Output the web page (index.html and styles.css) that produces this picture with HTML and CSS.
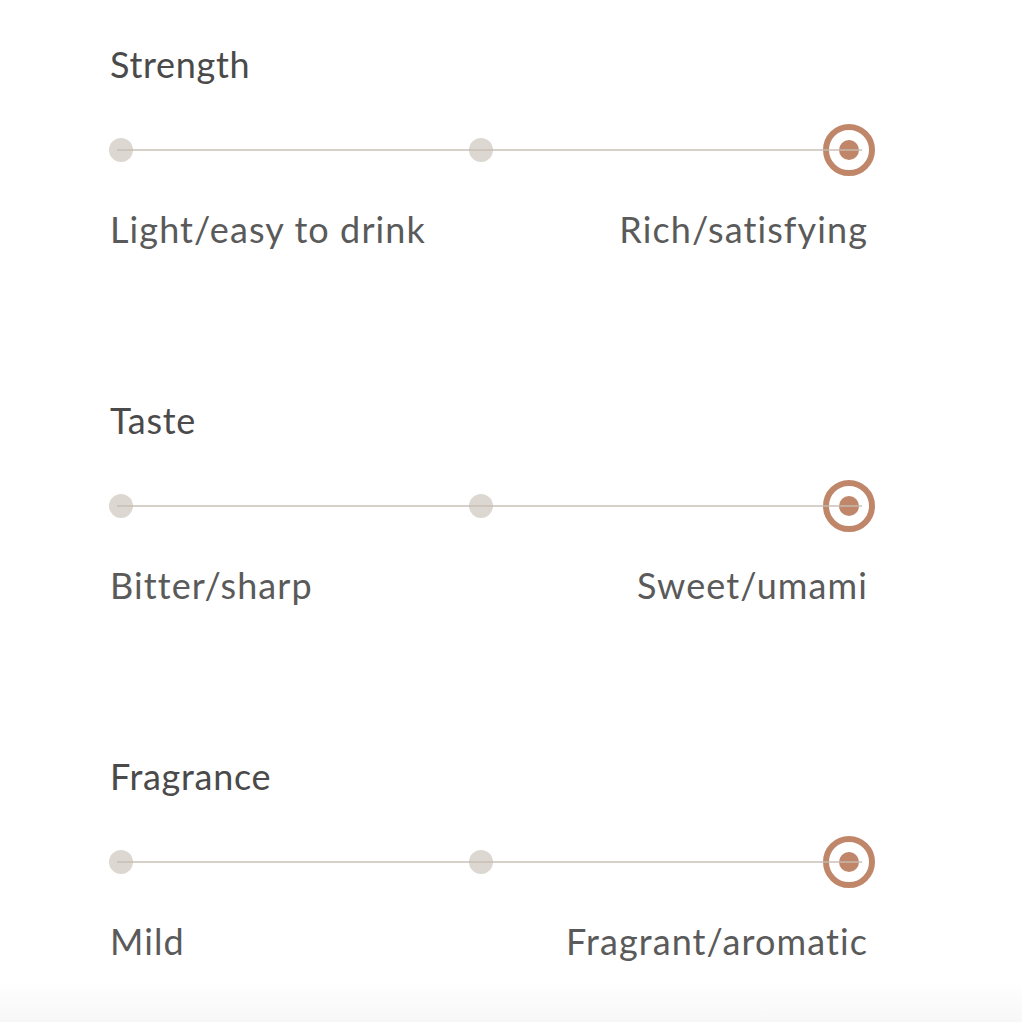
FILE: index.html
```html
<!DOCTYPE html>
<html lang="en">
<head>
<meta charset="utf-8">
<title>Flavour profile</title>
<link rel="stylesheet" href="styles.css">
</head>
<body>
<main class="profile">
  <section class="scale">
    <h2 class="scale-title">Strength</h2>
    <div class="track">
      <span class="line"></span>
      <span class="dot"></span>
      <span class="dot dot-mid"></span>
      <span class="knob"><span class="knob-core"></span></span>
    </div>
    <div class="labels"><span>Light/easy to drink</span><span>Rich/satisfying</span></div>
  </section>
  <section class="scale">
    <h2 class="scale-title">Taste</h2>
    <div class="track">
      <span class="line"></span>
      <span class="dot"></span>
      <span class="dot dot-mid"></span>
      <span class="knob"><span class="knob-core"></span></span>
    </div>
    <div class="labels"><span>Bitter/sharp</span><span>Sweet/umami</span></div>
  </section>
  <section class="scale">
    <h2 class="scale-title">Fragrance</h2>
    <div class="track">
      <span class="line"></span>
      <span class="dot"></span>
      <span class="dot dot-mid"></span>
      <span class="knob"><span class="knob-core"></span></span>
    </div>
    <div class="labels"><span>Mild</span><span>Fragrant/aromatic</span></div>
  </section>
</main>
</body>
</html>
```
FILE: styles.css
```css
html {
  min-height: 100%;
  background: linear-gradient(to bottom, #ffffff 0%, #ffffff 96%, #f7f7f7 100%);
}
body {
  margin: 0;
  font-family: Lato, "Liberation Sans", sans-serif;
  color: #4e4e4e;
}
.profile {
  width: 758px;
  padding: 46px 0 30px 110px;
}
.scale + .scale {
  margin-top: 155px;
}
.scale-title {
  margin: 0;
  font-size: 36px;
  line-height: 36px;
  font-weight: 400;
  letter-spacing: 0.7px;
  color: #4a4a4a;
}
.track {
  position: relative;
  display: flex;
  align-items: center;
  height: 52px;
  margin: 42px 0 0 -1px;
}
.line {
  position: absolute;
  left: 8px;
  width: 745px;
  top: 25px;
  height: 2px;
  background: rgba(198, 188, 178, 0.7);
  z-index: 1;
}
.dot {
  width: 24px;
  height: 24px;
  border-radius: 50%;
  background: #ddd7d1;
  flex: none;
}
.dot-mid {
  margin-left: 336px;
}
.knob {
  margin-left: 330px;
  width: 52px;
  height: 52px;
  box-sizing: border-box;
  border: 6px solid #c0866a;
  border-radius: 50%;
  display: flex;
  align-items: center;
  justify-content: center;
  flex: none;
}
.knob-core {
  width: 20px;
  height: 20px;
  border-radius: 50%;
  background: #c0866a;
}
.labels {
  display: flex;
  justify-content: space-between;
  margin-top: 35px;
  font-size: 36px;
  line-height: 36px;
  font-weight: 400;
  letter-spacing: 1.1px;
  color: #5a5a5a;
}
```
